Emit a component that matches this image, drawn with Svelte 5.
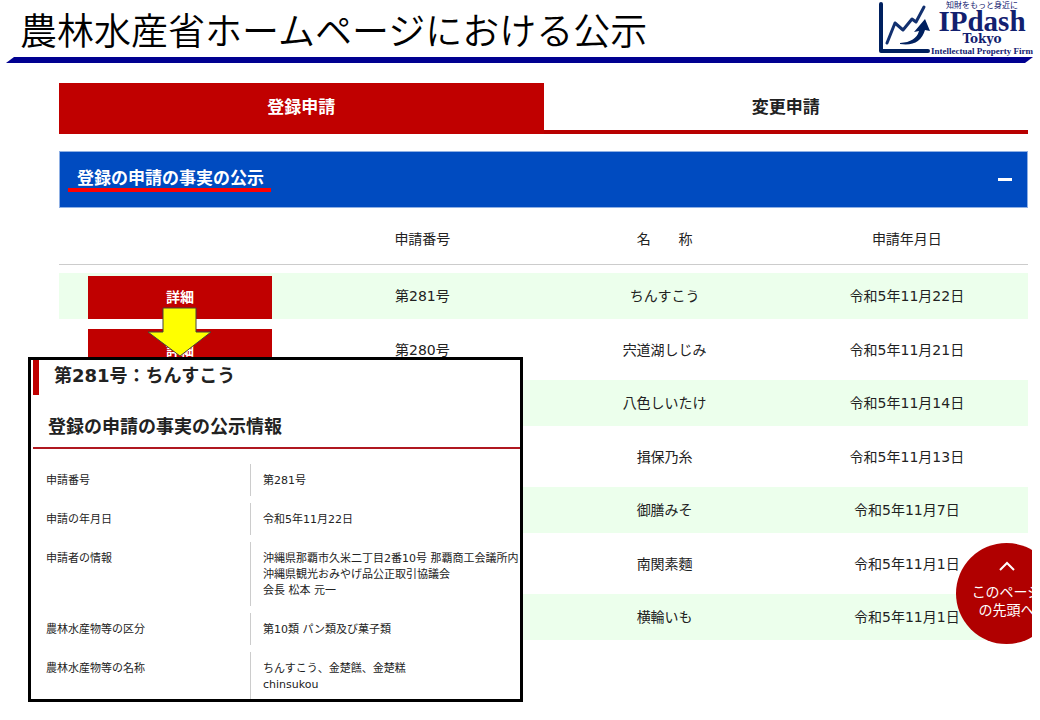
<script lang="ts">
	type Notice = { number?: string; name: string; date: string };

	const tabs = ['登録申請', '変更申請'];
	let activeTab = $state('登録申請');
	let isOpen = $state(true);

	const notices: Notice[] = [
		{ number: '第281号', name: 'ちんすこう', date: '令和5年11月22日' },
		{ number: '第280号', name: '宍道湖しじみ', date: '令和5年11月21日' },
		{ name: '八色しいたけ', date: '令和5年11月14日' },
		{ name: '揖保乃糸', date: '令和5年11月13日' },
		{ name: '御膳みそ', date: '令和5年11月7日' },
		{ name: '南関素麵', date: '令和5年11月1日' },
		{ name: '横輪いも', date: '令和5年11月1日' }
	];

	const details = [
		{ label: '申請番号', lines: ['第281号'] },
		{ label: '申請の年月日', lines: ['令和5年11月22日'] },
		{
			label: '申請者の情報',
			lines: [
				'沖縄県那覇市久米二丁目2番10号 那覇商工会議所内',
				'沖縄県観光おみやげ品公正取引協議会',
				'会長 松本 元一'
			]
		},
		{ label: '農林水産物等の区分', lines: ['第10類 パン類及び菓子類'] },
		{ label: '農林水産物等の名称', lines: ['ちんすこう、金楚餻、金楚糕', 'chinsukou'] }
	];
</script>

<div class="page">
	<header>
		<h1>農林水産省ホームページにおける公示</h1>
		<div class="logo">
			<svg width="54" height="54" viewBox="0 0 54 54" aria-hidden="true">
				<path d="M3 3V50H50" fill="none" stroke="#00205f" stroke-width="4" stroke-linecap="round" stroke-linejoin="round" />
				<path d="M9 42L17 22L25 29L34 18L38 21L46 6" fill="none" stroke="#12306f" stroke-width="3" stroke-linecap="round" stroke-linejoin="round" />
				<path d="M22 42Q38 41 41 30L36 31L47 18L52 30L47 29Q42 46 22 43Z" fill="#00205f" />
			</svg>
			<div class="logo-text">
				<span class="catch">知財をもっと身近に</span>
				<span class="brand">IPdash</span>
				<span class="city">Tokyo</span>
				<span class="firm">Intellectual Property Firm</span>
			</div>
		</div>
	</header>
	<div class="rule"></div>

	<main>
		<div class="tabs" role="tablist">
			{#each tabs as tab}
				<button
					role="tab"
					class:active={activeTab === tab}
					aria-selected={activeTab === tab}
					onclick={() => (activeTab = tab)}>{tab}</button
				>
			{/each}
		</div>

		<button class="accordion" aria-expanded={isOpen} onclick={() => (isOpen = !isOpen)}>
			<span class="accordion-title">登録の申請の事実の公示</span>
			<span class="minus"></span>
		</button>

		{#if isOpen}
			<table>
				<thead>
					<tr>
						<th></th>
						<th>申請番号</th>
						<th>名　　称</th>
						<th>申請年月日</th>
					</tr>
				</thead>
				<tbody>
					{#each notices as notice}
						<tr>
							<td class="action">
								{#if notice.number}
									<button>詳細</button>
								{/if}
							</td>
							<td>{notice.number ?? ''}</td>
							<td>{notice.name}</td>
							<td>{notice.date}</td>
						</tr>
					{/each}
				</tbody>
			</table>
		{/if}
	</main>

	<svg class="arrow" width="66" height="51" viewBox="0 0 66 51" aria-hidden="true">
		<path d="M16 1H49V25H64L33 49L1 25H16Z" fill="#ffff00" stroke="#44443a" />
	</svg>

	<section class="popup">
		<h2>第281号：ちんすこう</h2>
		<h3>登録の申請の事実の公示情報</h3>
		<dl>
			{#each details as detail}
				<dt>{detail.label}</dt>
				<dd>
					{#each detail.lines as line}
						<div>{line}</div>
					{/each}
				</dd>
			{/each}
		</dl>
	</section>

	<div class="to-top">
		<a href="#app">
			<svg width="16" height="10" viewBox="0 0 16 10" aria-hidden="true">
				<path d="M1 9L8 2L15 9" fill="none" stroke="#fff" stroke-width="2" />
			</svg>
			<span>このページ</span>
			<span>の先頭へ</span>
		</a>
	</div>
</div>

<style>
	:global(body) {
		margin: 0;
		background: #fff;
	}

	.page {
		position: relative;
		min-height: 720px;
		box-sizing: border-box;
		overflow: hidden;
		font-family: 'DejaVu Sans', 'Noto Sans CJK JP', sans-serif;
		font-size: 14px;
		line-height: 20px;
		color: #222;
	}

	button {
		border: 0;
		padding: 0;
		font: inherit;
		cursor: pointer;
	}

	header {
		display: flex;
		justify-content: space-between;
		align-items: center;
		height: 57px;
		padding: 0 8px 0 20px;
	}

	h1 {
		margin: 0;
		font-family: 'Noto Sans CJK JP', sans-serif;
		font-size: 37px;
		font-weight: 350;
		line-height: 48px;
		color: #000;
		white-space: nowrap;
	}

	.logo {
		display: flex;
		color: #12206f;
	}

	.logo-text {
		display: flex;
		flex-direction: column;
		align-items: center;
		width: 100px;
		font-family: 'Liberation Serif', 'Noto Sans CJK JP', serif;
		font-weight: 700;
		white-space: nowrap;
	}

	.catch {
		font-size: 8px;
		font-weight: 400;
		line-height: 9px;
	}

	.brand {
		font-size: 29px;
		line-height: 22px;
	}

	.city {
		font-family: 'DejaVu Serif', serif;
		font-size: 12px;
		line-height: 15px;
	}

	.firm {
		font-size: 9px;
		line-height: 9px;
	}

	.rule {
		height: 6px;
		margin: 0 7px 0 6px;
		background: #000090;
		clip-path: polygon(8px 0, 100% 0, calc(100% - 8px) 100%, 0 100%);
	}

	main {
		margin: 20px 12px 0 59px;
	}

	.tabs {
		display: flex;
		margin-bottom: 17px;
	}

	.tabs button {
		flex: 1;
		height: 51px;
		border-bottom: 4px solid #b80000;
		background: #fff;
		font-size: 17px;
		font-weight: 700;
		color: #222;
	}

	.tabs button.active {
		border-color: #c00000;
		background: #c00000;
		color: #fff;
	}

	.accordion {
		display: flex;
		justify-content: space-between;
		align-items: center;
		width: 100%;
		height: 57px;
		padding: 0 15px 0 8px;
		border: 1px solid #8fb0e4;
		background: #004bc0;
		color: #fff;
	}

	.accordion-title {
		padding: 0 7px 0 9px;
		border-bottom: 4px solid #f00;
		font-size: 17px;
		font-weight: 700;
	}

	.minus {
		width: 14px;
		height: 3px;
		background: #fff;
	}

	table {
		width: 100%;
		table-layout: fixed;
		border-spacing: 0 8px;
		text-align: center;
	}

	th,
	td {
		padding: 0;
		font-weight: 400;
	}

	th {
		height: 46px;
		padding-bottom: 2px;
		border-bottom: 1px solid #ccc;
	}

	td {
		height: 45px;
	}

	tbody tr:nth-child(odd) td {
		height: 46px;
		background: #ecffec;
	}

	.action {
		vertical-align: bottom;
	}

	.action button {
		display: block;
		width: 76%;
		height: 43px;
		margin: 0 auto;
		padding-bottom: 2px;
		background: #c00000;
		font-weight: 700;
		color: #fff;
	}

	.arrow {
		position: absolute;
		top: 307px;
		left: 147px;
	}

	.popup {
		position: absolute;
		top: 357px;
		left: 28px;
		box-sizing: border-box;
		width: 495px;
		padding-left: 2px;
		border: 3px solid #000;
		background: #fff;
	}

	h2,
	h3 {
		margin: 0;
		font-size: 18px;
	}

	h2 {
		padding: 0 0 3px 15px;
		border-left: 6px solid #c00000;
		line-height: 32px;
	}

	h3 {
		margin-top: 17px;
		padding: 0 0 5px 15px;
		border-bottom: 2px solid #b01820;
		line-height: 30px;
	}

	dl {
		display: grid;
		grid-template-columns: 217px 1fr;
		row-gap: 7px;
		margin: 15px 0 0;
		font-size: 11px;
		line-height: 16px;
		white-space: nowrap;
	}

	dt {
		padding: 9px 0 7px 13px;
	}

	dd {
		margin: 0;
		padding: 9px 0 7px 12px;
		border-left: 1px solid #ccc;
	}

	dd:last-child {
		padding-bottom: 6px;
	}

	/* The round button runs past the sheet, so its wrapper cuts it off */
	.to-top {
		position: absolute;
		top: 543px;
		right: 8px;
		width: 76px;
		overflow: hidden;
	}

	.to-top a {
		display: flex;
		flex-direction: column;
		align-items: center;
		box-sizing: border-box;
		width: 101px;
		height: 101px;
		padding-top: 18px;
		border-radius: 50%;
		background: #b00000;
		line-height: 18px;
		color: #fff;
		text-decoration: none;
	}

	.to-top svg {
		margin-bottom: 12px;
	}
</style>
